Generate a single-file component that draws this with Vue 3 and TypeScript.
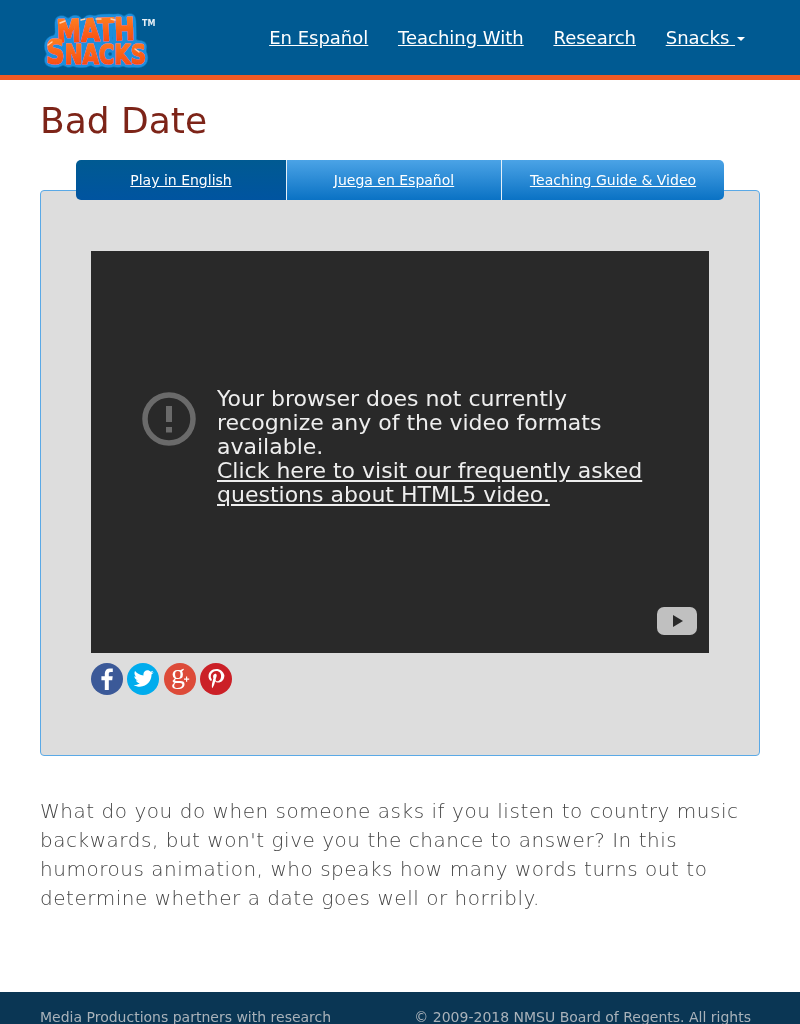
<template>
  <div class="page">
    <header class="site-header">
      <a class="logo" href="#" aria-label="Math Snacks">
        <svg width="120" height="60" viewBox="0 0 120 60">
          <defs>
            <linearGradient id="logoFill" x1="0" y1="0" x2="0" y2="1">
              <stop offset="0" stop-color="#ff8a24" />
              <stop offset="1" stop-color="#f4400c" />
            </linearGradient>
            <filter id="logoHalo" x="-10%" y="-15%" width="120%" height="130%">
              <feGaussianBlur in="SourceAlpha" stdDeviation="2.4" />
              <feComponentTransfer result="soft">
                <feFuncA type="linear" slope="10" intercept="-0.6" />
              </feComponentTransfer>
              <feFlood flood-color="#1b8fdc" />
              <feComposite in2="soft" operator="in" result="halo" />
              <feMerge>
                <feMergeNode in="halo" />
                <feMergeNode in="SourceGraphic" />
              </feMerge>
            </filter>
          </defs>
          <g class="logo-text" filter="url(#logoHalo)">
            <text class="logo-letters" x="19" y="30" font-size="31" textLength="78" lengthAdjust="spacingAndGlyphs" transform="rotate(-2 58 30)">MATH</text>
            <text class="logo-letters" x="8" y="53" font-size="27" textLength="100" lengthAdjust="spacingAndGlyphs"><tspan font-size="33">S</tspan>NACKS</text>
          </g>
          <path class="logo-shine" d="M22 12l5-2M43 9l4-1M58 8l5 0M73 8l4 1M10 34l4-3M97 38l4 3" />
          <text class="logo-tm" x="104" y="15">TM</text>
        </svg>
      </a>
      <nav class="main-nav">
        <a v-for="item in navItems" :key="item" href="#">{{ item }}</a>
        <a href="#" class="dropdown">Snacks <span class="caret"></span></a>
      </nav>
    </header>

    <main class="content">
      <h1>Bad Date</h1>

      <div class="tabs">
        <a
          v-for="(tab, i) in tabs"
          :key="tab"
          href="#"
          class="tab"
          :class="{ active: i === 0 }"
        >{{ tab }}</a>
      </div>

      <section class="panel">
        <div class="video">
          <div class="video-error">
            <svg class="error-icon" width="54" height="54" viewBox="0 0 54 54">
              <circle cx="27" cy="27" r="24" fill="none" stroke="#6a6a6a" stroke-width="5.5" />
              <rect x="24" y="14" width="6" height="16" fill="#6a6a6a" />
              <rect x="24" y="35" width="6" height="5.5" fill="#6a6a6a" />
            </svg>
            <p>
              Your browser does not currently recognize any of the video formats available.<br />
              <a href="#">Click here to visit our frequently asked questions about HTML5 video.</a>
            </p>
          </div>
          <svg class="yt-button" width="40" height="28" viewBox="0 0 40 28">
            <rect width="40" height="28" rx="7" fill="#c0c0c0" />
            <path d="M16 8 L26 14 L16 20 Z" fill="#292929" />
          </svg>
        </div>

        <div class="share">
          <a href="#" class="share-btn fb" aria-label="Facebook">
            <svg width="32" height="32" viewBox="0 0 32 32">
              <path d="M17.8 27V17.2h3.4l.5-3.9h-3.9v-2.4c0-1.1.4-1.8 1.9-1.8h2.1V5.6c-.4 0-1.6-.2-3-.2-3 0-5 1.8-5 5.1v2.8h-3.4v3.9h3.4V27z" fill="#fff" />
            </svg>
          </a>
          <a href="#" class="share-btn tw" aria-label="Twitter">
            <svg width="32" height="32" viewBox="0 0 32 32">
              <path d="M26.5 9.3c-.8.4-1.6.6-2.5.7.9-.5 1.6-1.4 1.9-2.4-.8.5-1.8.9-2.7 1-.8-.8-1.9-1.4-3.2-1.4-2.4 0-4.3 1.9-4.3 4.3 0 .3 0 .7.1 1-3.6-.2-6.8-1.9-8.9-4.5-.4.6-.6 1.4-.6 2.2 0 1.5.8 2.8 1.9 3.6-.7 0-1.4-.2-2-.5v.1c0 2.1 1.5 3.8 3.5 4.2-.4.1-.7.2-1.1.2-.3 0-.5 0-.8-.1.6 1.7 2.1 3 4 3-1.5 1.2-3.3 1.9-5.4 1.9-.3 0-.7 0-1-.1 1.9 1.2 4.2 1.9 6.6 1.9 7.9 0 12.2-6.5 12.2-12.2v-.6c.9-.6 1.6-1.4 2.2-2.2z" fill="#fff" transform="translate(1.5 0.5) scale(.95)" />
            </svg>
          </a>
          <a href="#" class="share-btn gp" aria-label="Google Plus">
            <svg width="32" height="32" viewBox="0 0 32 32">
              <text x="7" y="20" class="gp-g">g</text>
              <path d="M22 13.5h1.2v2h2v1.2h-2v2H22v-2h-2v-1.2h2z" fill="#fff" />
            </svg>
          </a>
          <a href="#" class="share-btn pin" aria-label="Pinterest">
            <svg width="32" height="32" viewBox="0 0 32 32">
              <path d="M16.5 6c-5.2 0-8 3.4-8 7.2 0 1.8.9 4 2.5 4.7.5.2.5 0 .8-1.3 0-.2 0-.3-.1-.5-2.1-2.6-.4-8.1 4.5-8.1 7 0 5.7 10.3 1.2 10.3-1.2 0-2-.9-1.7-2.1.3-1.3 1-2.8 1-3.8 0-2.5-3.6-2.1-3.6 1.2 0 1 .3 1.7.3 1.7s-1.2 4.8-1.4 5.7c-.3 1.5 0 3.9.1 4.1 0 .1.2.2.3 0 .1-.1 1.6-2.3 2-4l.8-2.9c.4.8 1.6 1.4 2.8 1.4 3.7 0 6.4-3.3 6.4-7.4C23.4 8.7 20.2 6 16.5 6z" fill="#fff" />
            </svg>
          </a>
        </div>
      </section>

      <p class="description">
        What do you do when someone asks if you listen to country music backwards, but won't give you the chance to answer? In this humorous animation, who speaks how many words turns out to determine whether a date goes well or horribly.
      </p>
    </main>

    <footer class="site-footer">
      <p>Media Productions partners with research</p>
      <p>© 2009-2018 NMSU Board of Regents. All rights</p>
    </footer>
  </div>
</template>

<script setup lang="ts">
const navItems: string[] = ['En Español', 'Teaching With', 'Research']
const tabs: string[] = ['Play in English', 'Juega en Español', 'Teaching Guide & Video']
</script>

<style>
html,
body {
  margin: 0;
  height: 1024px;
  overflow: hidden;
  background: #fff;
}
</style>

<style scoped>
.page {
  height: 1024px;
  overflow: hidden;
  display: flex;
  flex-direction: column;
  font-family: "DejaVu Sans", sans-serif;
  color: #333;
  will-change: transform;
}

.site-header {
  height: 75px;
  flex: none;
  background: #005a92;
  border-bottom: 5px solid #f15a24;
  display: flex;
  align-items: flex-start;
  justify-content: space-between;
  padding: 0 55px 0 38px;
}

.logo {
  display: block;
  margin-top: 11px;
  height: 60px;
}

.logo svg {
  overflow: visible;
}

.logo-text {
  font-family: "DejaVu Sans", sans-serif;
  font-weight: 700;
}

.logo-letters {
  fill: url(#logoFill);
  stroke: url(#logoFill);
  stroke-width: 1.6px;
  stroke-linejoin: round;
}

.logo-shine {
  fill: none;
  stroke: #ffd2b0;
  stroke-width: 1.4px;
  stroke-linecap: round;
}

.logo-tm {
  font-family: "DejaVu Sans", sans-serif;
  font-size: 8px;
  font-weight: 700;
  fill: #e8f0f6;
}

.main-nav {
  display: flex;
  gap: 29.7px;
  padding-top: 26px;
  font-size: 18px;
  line-height: 24px;
}

.main-nav a {
  color: #fff;
}

.caret {
  display: inline-block;
  width: 0;
  height: 0;
  margin-left: 2px;
  vertical-align: middle;
  border-top: 4px solid #fff;
  border-left: 4px solid transparent;
  border-right: 4px solid transparent;
}

.content {
  flex: 1;
  padding: 0 40px;
}

h1 {
  margin: 21px 0 19px;
  font-size: 36px;
  line-height: 40px;
  font-weight: 400;
  color: #7d2418;
}

.tabs {
  display: flex;
  position: relative;
  z-index: 1;
  margin: 0 36px -10px;
  height: 40px;
  border-radius: 5px;
  overflow: hidden;
}

.tab {
  display: flex;
  align-items: center;
  justify-content: center;
  font-size: 14px;
  color: #fff;
  background: linear-gradient(#4ba3e6, #0a72c4);
  border-left: 1px solid #e6f0f8;
}

.tab:nth-child(1) {
  width: 210px;
  border-left: 0;
}

.tab:nth-child(2) {
  width: 214px;
}

.tab:nth-child(3) {
  flex: 1;
}

.tab.active {
  background: linear-gradient(#005a92, #0054a0);
}

.panel {
  height: 566px;
  box-sizing: border-box;
  padding: 60px 50px 0;
  background: #ddd;
  border: 1px solid #5aa9e6;
  border-radius: 4px;
}

.video {
  position: relative;
  height: 402px;
  background: #292929;
  display: flex;
  align-items: flex-start;
}

.video-error {
  display: flex;
  padding: 136px 60px 0 51px;
  gap: 21px;
}

.error-icon {
  flex: none;
  margin-top: 5px;
}

.video-error p {
  margin: 0;
  font-size: 22px;
  line-height: 24px;
  color: #eee;
}

.video-error a {
  color: #eee;
}

.yt-button {
  position: absolute;
  right: 12px;
  bottom: 18px;
}

.share {
  display: flex;
  gap: 4.45px;
  margin-top: 10px;
}

.share-btn {
  display: block;
  width: 32px;
  height: 32px;
  border-radius: 50%;
}

.share-btn svg {
  display: block;
  overflow: visible;
}

.fb {
  background: #3b5998;
}

.tw {
  background: #00aced;
}

.gp {
  background: #dd4b39;
}

.pin {
  background: #cb2027;
}

.gp-g {
  font-family: "Liberation Serif", serif;
  font-size: 28px;
  fill: #fff;
}

.description {
  margin: 41px 0 0;
  font-size: 20px;
  line-height: 29px;
  font-weight: 200;
  letter-spacing: 0.53px;
  color: #444;
}

.site-footer {
  flex: none;
  height: 32px;
  box-sizing: border-box;
  overflow: hidden;
  background: #0a3654;
  display: flex;
  justify-content: space-between;
  padding: 15px 49px 0 40px;
  font-size: 14px;
  line-height: 20px;
  color: #a9b2ba;
}

.site-footer p {
  margin: 0;
}
</style>
